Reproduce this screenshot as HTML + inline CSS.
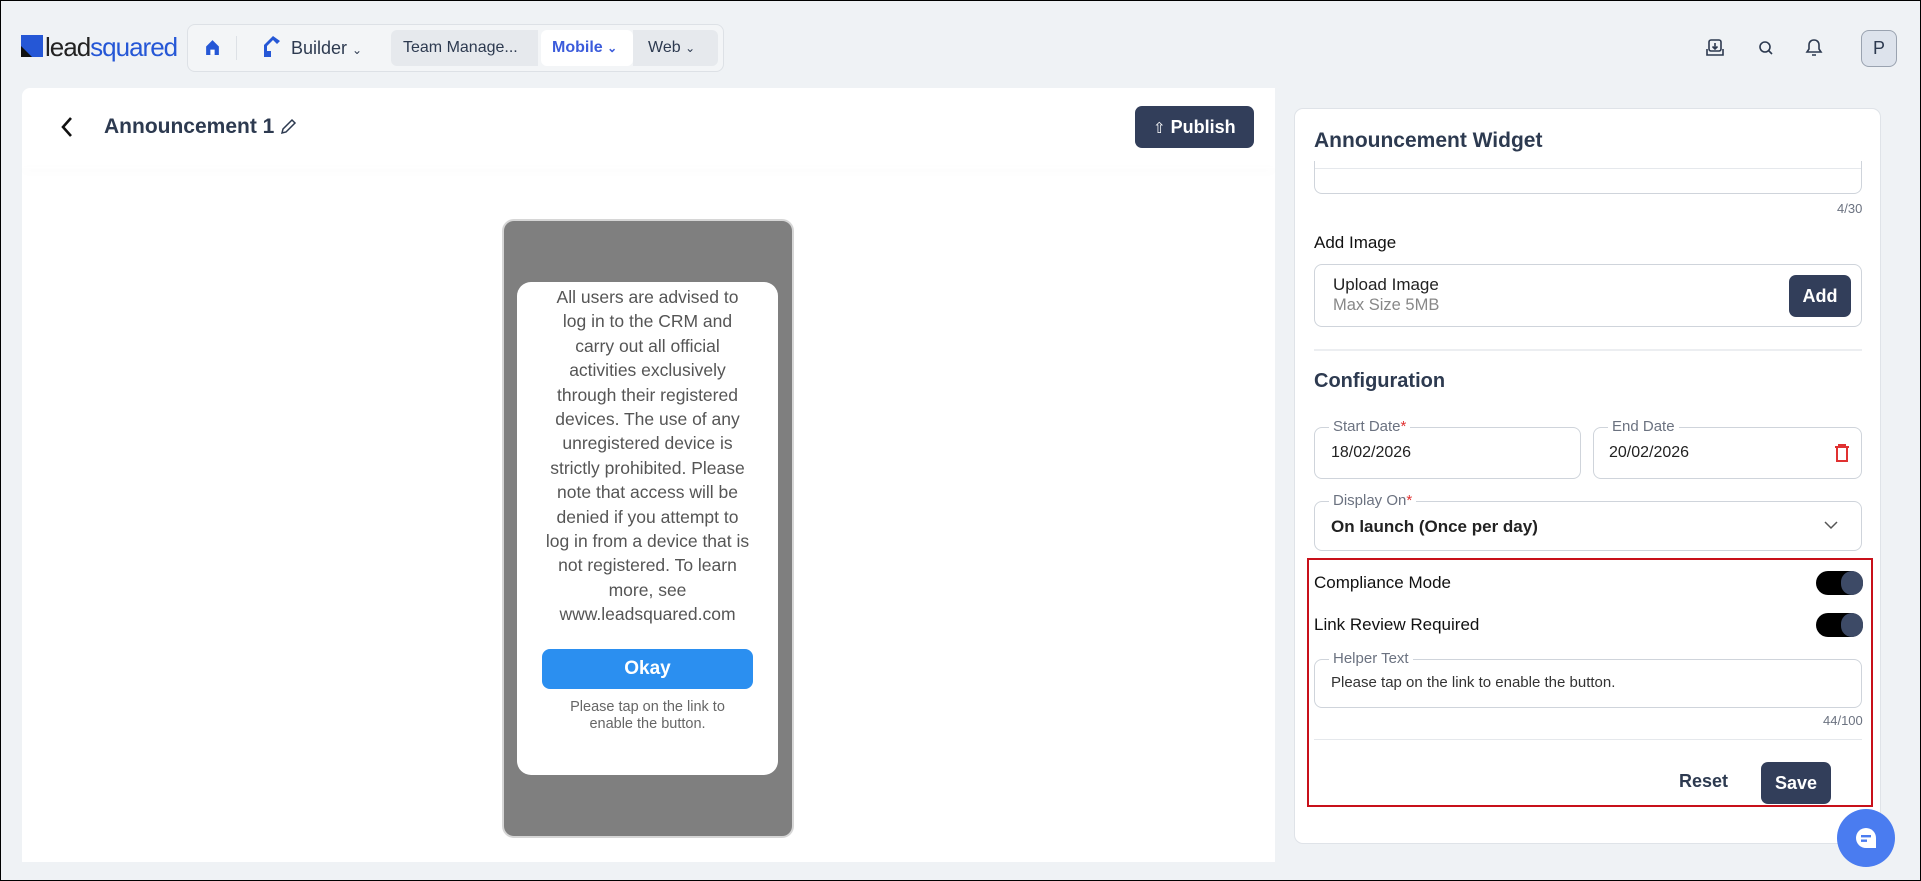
<!DOCTYPE html>
<html><head><meta charset="utf-8"><style>
*{box-sizing:border-box;margin:0;padding:0}
body{width:1921px;height:881px;overflow:hidden;background:#eff2f5;font-family:"Liberation Sans",sans-serif;color:#2d3a50;position:relative;border:1px solid #000}
.a{position:absolute}
.t{position:absolute;white-space:nowrap}
.in{position:absolute;border:1px solid #cfd4db;border-radius:8px;background:#fff}
.lbl{position:absolute;top:-10px;left:14px;background:#fff;padding:0 4px;font-size:15px;color:#6b7280}
.tog{position:absolute;width:47px;height:24px;border-radius:12px;background:#000}
.tog i{position:absolute;right:0;top:0;width:22px;height:24px;border-radius:12px;background:#3d4a66}
</style></head><body>
<div class="a" style="left:20px;top:34px;width:22px;height:22px;background:#2557d6"></div>
<div class="a" style="left:20px;top:45px;width:0;height:0;border-left:11px solid #111;border-top:11px solid transparent"></div>
<div class="t" style="left:44px;top:31px;font-size:26px;letter-spacing:-1px;color:#222">lead<span style="color:#2557d6">squared</span></div>
<div class="a" style="left:186px;top:23px;width:537px;height:48px;border:1px solid #dde1e6;border-radius:8px;background:#f3f5f7"></div>
<svg class="a" style="left:203px;top:38px" width="17" height="17" viewBox="0 0 16 16"><path d="M2 7L8 1l6 6v8H2z" fill="#2557d6"/><rect x="6" y="10" width="4" height="5" fill="#fff"/></svg>
<div class="a" style="left:235px;top:35px;width:1px;height:24px;background:#dde1e6"></div>
<svg class="a" style="left:260px;top:34px" width="20" height="24" viewBox="0 0 20 24"><path d="M12 1L3 10v12h7v-6H6v-5l6-6 4 4 3-3z" fill="#2557d6"/></svg>
<div class="t" style="left:290px;top:37px;font-size:18px;color:#2d3a50">Builder <span style="font-size:12px">⌄</span></div>
<div class="a" style="left:390px;top:29px;width:147px;height:36px;background:#e6e9ed;border-radius:6px 0 0 6px"></div>
<div class="t" style="left:402px;top:38px;font-size:16px;color:#2d3a50">Team Manage...</div>
<div class="a" style="left:540px;top:29px;width:92px;height:36px;background:#fff;border-radius:6px"></div>
<div class="t" style="left:551px;top:38px;font-size:16px;font-weight:bold;color:#3b5bdb">Mobile <span style="font-size:12px">⌄</span></div>
<div class="a" style="left:632px;top:29px;width:85px;height:36px;background:#e6e9ed;border-radius:0 6px 6px 0"></div>
<div class="t" style="left:647px;top:38px;font-size:16px">Web <span style="font-size:12px">⌄</span></div>
<svg class="a" style="left:1704px;top:37px" width="20" height="20" viewBox="0 0 20 20" fill="none" stroke="#2d3a50" stroke-width="1.6"><rect x="4" y="2" width="12" height="11" rx="2"/><path d="M10 5v6M7.5 8.5L10 11l2.5-2.5M2 11v6h16v-6"/></svg>
<svg class="a" style="left:1757px;top:39px" width="16" height="16" viewBox="0 0 16 16" fill="none" stroke="#2d3a50" stroke-width="1.6"><circle cx="7" cy="7" r="5"/><path d="M11 11l3 3"/></svg>
<svg class="a" style="left:1804px;top:37px" width="18" height="20" viewBox="0 0 18 20" fill="none" stroke="#2d3a50" stroke-width="1.6"><path d="M9 2c-3 0-5 2-5 5v4l-2 3h14l-2-3V7c0-3-2-5-5-5zM7 17h4"/></svg>
<div class="a" style="left:1860px;top:29px;width:36px;height:37px;border:1px solid #9aa3b0;border-radius:8px;background:#dde3ec;font-size:18px;text-align:center;line-height:35px">P</div>
<div class="a" style="left:21px;top:87px;width:1253px;height:774px;background:#fff;border-radius:8px 0 0 0"></div>
<div class="a" style="left:21px;top:166px;width:1253px;height:1px;box-shadow:0 3px 8px rgba(0,0,0,.08)"></div>
<svg class="a" style="left:58px;top:115px" width="16" height="22" viewBox="0 0 16 22" fill="none" stroke="#111" stroke-width="2.6"><path d="M12 2L4 11l8 9"/></svg>
<div class="t" style="left:103px;top:114px;font-size:21px;font-weight:bold;color:#2d3a50">Announcement 1</div>
<svg class="a" style="left:278px;top:117px" width="18" height="18" viewBox="0 0 18 18" fill="none" stroke="#2d3a50" stroke-width="1.5"><path d="M3 15l1-4 9-9 3 3-9 9z"/></svg>
<div class="a" style="left:1134px;top:105px;width:119px;height:42px;background:#323e5a;border-radius:7px;color:#fff;font-size:18px;font-weight:bold;line-height:42px;padding-left:18px"><span style="font-size:15px;font-weight:normal">⇧</span> Publish</div>
<div class="a" style="left:501px;top:218px;width:292px;height:619px;background:#7f7f7f;border-radius:12px;border:2px solid #d6d6d6"></div>
<div class="a" style="left:516px;top:281px;width:261px;height:493px;background:#fff;border-radius:14px"></div>
<div class="a" style="left:516px;top:284px;width:261px;text-align:center;font-size:17.5px;line-height:24.4px;color:#555">All users are advised to<br>log in to the CRM and<br>carry out all official<br>activities exclusively<br>through their registered<br>devices. The use of any<br>unregistered device is<br>strictly prohibited. Please<br>note that access will be<br>denied if you attempt to<br>log in from a device that is<br>not registered. To learn<br>more, see<br>www.leadsquared.com</div>
<div class="a" style="left:541px;top:648px;width:211px;height:40px;background:#2b8ff0;border-radius:8px;color:#fff;font-weight:bold;font-size:19px;text-align:center;line-height:40px">Okay</div>
<div class="a" style="left:516px;top:698px;width:261px;text-align:center;font-size:14.5px;line-height:17px;color:#666">Please tap on the link to<br>enable the button.</div>
<div class="a" style="left:1293px;top:107px;width:587px;height:736px;background:#fff;border:1px solid #dfe3e8;border-radius:9px"></div>
<div class="t" style="left:1313px;top:128px;font-size:21px;font-weight:bold">Announcement Widget</div>
<div class="a" style="left:1313px;top:167px;width:548px;height:1px;background:#e5e8ec"></div>
<div class="a" style="left:1313px;top:160px;width:548px;height:33px;border:1px solid #cfd4db;border-top:none;border-radius:0 0 8px 8px"></div>
<div class="t" style="left:1836px;top:200px;font-size:13px;color:#6b7280">4/30</div>
<div class="t" style="left:1313px;top:232px;font-size:17px;color:#111">Add Image</div>
<div class="in" style="left:1313px;top:263px;width:548px;height:63px"></div>
<div class="t" style="left:1332px;top:274px;font-size:17px;color:#222">Upload Image</div>
<div class="t" style="left:1332px;top:295px;font-size:16.5px;color:#888">Max Size 5MB</div>
<div class="a" style="left:1788px;top:274px;width:62px;height:42px;background:#323e5a;border-radius:7px;color:#fff;font-weight:bold;font-size:18px;text-align:center;line-height:42px">Add</div>
<div class="a" style="left:1313px;top:348px;width:548px;height:2px;background:#eceef1"></div>
<div class="t" style="left:1313px;top:369px;font-size:20px;font-weight:bold">Configuration</div>
<div class="in" style="left:1313px;top:426px;width:267px;height:52px"><div class="lbl">Start Date<span style="color:#e03131">*</span></div></div>
<div class="t" style="left:1330px;top:443px;font-size:16px;color:#222">18/02/2026</div>
<div class="in" style="left:1592px;top:426px;width:269px;height:52px"><div class="lbl">End Date</div></div>
<div class="t" style="left:1608px;top:443px;font-size:16px;color:#222">20/02/2026</div>
<svg class="a" style="left:1833px;top:442px" width="16" height="20" viewBox="0 0 16 20" fill="none" stroke="#e03131" stroke-width="2"><path d="M1 4h14M5 4V2h6v2M3 4v14h10V4"/></svg>
<div class="in" style="left:1313px;top:500px;width:548px;height:50px"><div class="lbl">Display On<span style="color:#e03131">*</span></div></div>
<div class="t" style="left:1330px;top:516px;font-size:17px;font-weight:bold;color:#222">On launch (Once per day)</div>
<svg class="a" style="left:1822px;top:519px" width="16" height="10" viewBox="0 0 16 10" fill="none" stroke="#555" stroke-width="1.5"><path d="M2 2l6 6 6-6"/></svg>
<div class="a" style="left:1306px;top:557px;width:566px;height:249px;border:2px solid #c8101a"></div>
<div class="t" style="left:1313px;top:572px;font-size:17px;color:#111">Compliance Mode</div>
<div class="tog" style="left:1815px;top:570px"><i></i></div>
<div class="t" style="left:1313px;top:614px;font-size:17px;color:#111">Link Review Required</div>
<div class="tog" style="left:1815px;top:612px"><i></i></div>
<div class="in" style="left:1313px;top:658px;width:548px;height:49px"><div class="lbl">Helper Text</div></div>
<div class="t" style="left:1330px;top:673px;font-size:15px;color:#333">Please tap on the link to enable the button.</div>
<div class="t" style="left:1822px;top:712px;font-size:13px;color:#6b7280">44/100</div>
<div class="a" style="left:1313px;top:738px;width:548px;height:1px;background:#e5e8ec"></div>
<div class="t" style="left:1678px;top:770px;font-size:18px;font-weight:bold;color:#2d3a50">Reset</div>
<div class="a" style="left:1760px;top:761px;width:70px;height:42px;background:#323e5a;border-radius:7px;color:#fff;font-weight:bold;font-size:18px;text-align:center;line-height:42px">Save</div>
<div class="a" style="left:1836px;top:808px;width:58px;height:58px;border-radius:50%;background:#4a7cf0"></div>
<svg class="a" style="left:1853px;top:825px" width="24" height="24" viewBox="0 0 24 24"><path d="M12 2a10 10 0 1 0 0 20h10V12A10 10 0 0 0 12 2z" fill="#fff"/><rect x="7" y="9" width="10" height="2.4" fill="#4a7cf0"/><rect x="7" y="13.5" width="6" height="2.4" fill="#4a7cf0"/></svg>
</body></html>
